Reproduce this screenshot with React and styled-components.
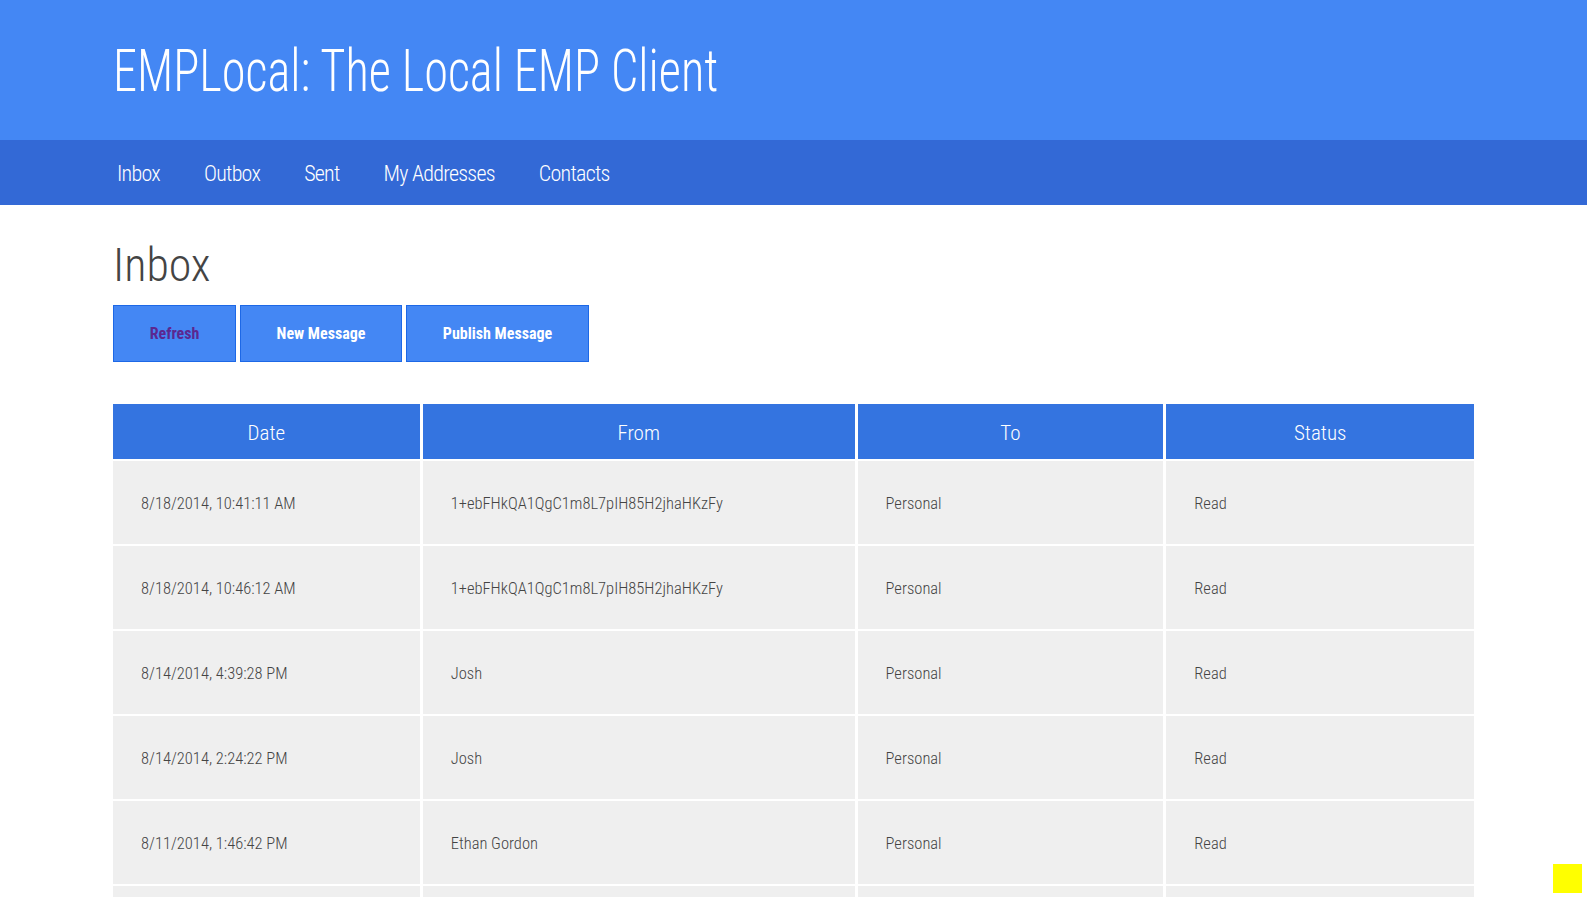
import React from 'react';
import styled, { createGlobalStyle } from 'styled-components';

const GlobalStyle = createGlobalStyle`
  html, body {
    margin: 0;
    padding: 0;
    background: #fff;
    font-family: "Roboto Condensed", Roboto, "Liberation Sans", sans-serif;
    font-weight: 300;
    color: #444;
  }
`;

const Header = styled.header`
  background-color: #4487f4;
  height: 140px;
  padding: 0 113px;
  box-sizing: border-box;
`;

const Title = styled.h1`
  margin: 0;
  padding-top: 38px;
  font-size: 59px;
  font-weight: 300;
  line-height: 66px;
  color: #fff;
  white-space: nowrap;
  transform: scaleX(0.82);
  transform-origin: left center;
`;

const Nav = styled.nav`
  background-color: #3369d6;
  height: 65px;
  box-sizing: border-box;
  padding: 2px 113px 0 117px;
  display: flex;
  align-items: center;
  gap: 44px;
`;

const NavLink = styled.a`
  color: #fff;
  font-size: 22px;
  font-weight: 300;
  letter-spacing: -0.75px;
  text-decoration: none;
`;

const Main = styled.main`
  padding: 0 113px;
`;

const PageTitle = styled.h2`
  margin: 0;
  padding-top: 30px;
  font-size: 46px;
  font-weight: 300;
  line-height: 60px;
  color: #444;
`;

const Toolbar = styled.div`
  display: flex;
  gap: 4px;
  margin-top: 10px;
`;

const Button = styled.a`
  display: flex;
  align-items: center;
  justify-content: center;
  height: 57px;
  width: ${(p) => p.$w}px;
  box-sizing: border-box;
  background-color: #4487f4;
  border: 1px solid #1d68e6;
  color: ${(p) => (p.$visited ? '#5c2790' : '#fff')};
  font-weight: 700;
  font-size: 16px;
  text-decoration: none;
  cursor: pointer;
`;

const Table = styled.table`
  margin-top: 40px;
  margin-left: -3px;
  width: calc(100% + 6px);
  border-collapse: separate;
  border-spacing: 3px 2px;
`;

const Th = styled.th`
  background-color: #3474e0;
  color: #fff;
  font-weight: 300;
  font-size: 21px;
  height: 55px;
  box-sizing: border-box;
  padding: 3px 0 0;
  text-align: center;
  width: ${(p) => p.$w}px;
`;

const Td = styled.td`
  background-color: #efefef;
  height: 83px;
  padding: 1px 28px 0;
  box-sizing: border-box;
  font-size: 16.5px;
  color: #444;
  vertical-align: middle;
`;

const Marker = styled.div`
  position: fixed;
  right: 5px;
  bottom: 4px;
  width: 29px;
  height: 29px;
  background: #ffff00;
`;

const messages = [
  ['8/18/2014, 10:41:11 AM', '1+ebFHkQA1QgC1m8L7pIH85H2jhaHKzFy', 'Personal', 'Read'],
  ['8/18/2014, 10:46:12 AM', '1+ebFHkQA1QgC1m8L7pIH85H2jhaHKzFy', 'Personal', 'Read'],
  ['8/14/2014, 4:39:28 PM', 'Josh', 'Personal', 'Read'],
  ['8/14/2014, 2:24:22 PM', 'Josh', 'Personal', 'Read'],
  ['8/11/2014, 1:46:42 PM', 'Ethan Gordon', 'Personal', 'Read'],
  ['8/10/2014, 9:12:05 AM', 'Ethan Gordon', 'Personal', 'Read'],
  ['8/9/2014, 6:30:51 PM', 'Josh', 'Personal', 'Read'],
];

const App = () => (
  <>
    <GlobalStyle />
    <Header>
      <Title>EMPLocal: The Local EMP Client</Title>
    </Header>
    <Nav>
      <NavLink href="#">Inbox</NavLink>
      <NavLink href="#">Outbox</NavLink>
      <NavLink href="#">Sent</NavLink>
      <NavLink href="#">My Addresses</NavLink>
      <NavLink href="#">Contacts</NavLink>
    </Nav>
    <Main>
      <PageTitle>Inbox</PageTitle>
      <Toolbar>
        <Button $w={123} $visited>Refresh</Button>
        <Button $w={162}>New Message</Button>
        <Button $w={183}>Publish Message</Button>
      </Toolbar>
      <Table>
        <thead>
          <tr>
            <Th $w={307}>Date</Th>
            <Th $w={432}>From</Th>
            <Th $w={306}>To</Th>
            <Th $w={308}>Status</Th>
          </tr>
        </thead>
        <tbody>
          {messages.map((m, i) => (
            <tr key={i}>
              {m.map((c, j) => (
                <Td key={j}>{c}</Td>
              ))}
            </tr>
          ))}
        </tbody>
      </Table>
    </Main>
    <Marker />
  </>
);

export default App;
